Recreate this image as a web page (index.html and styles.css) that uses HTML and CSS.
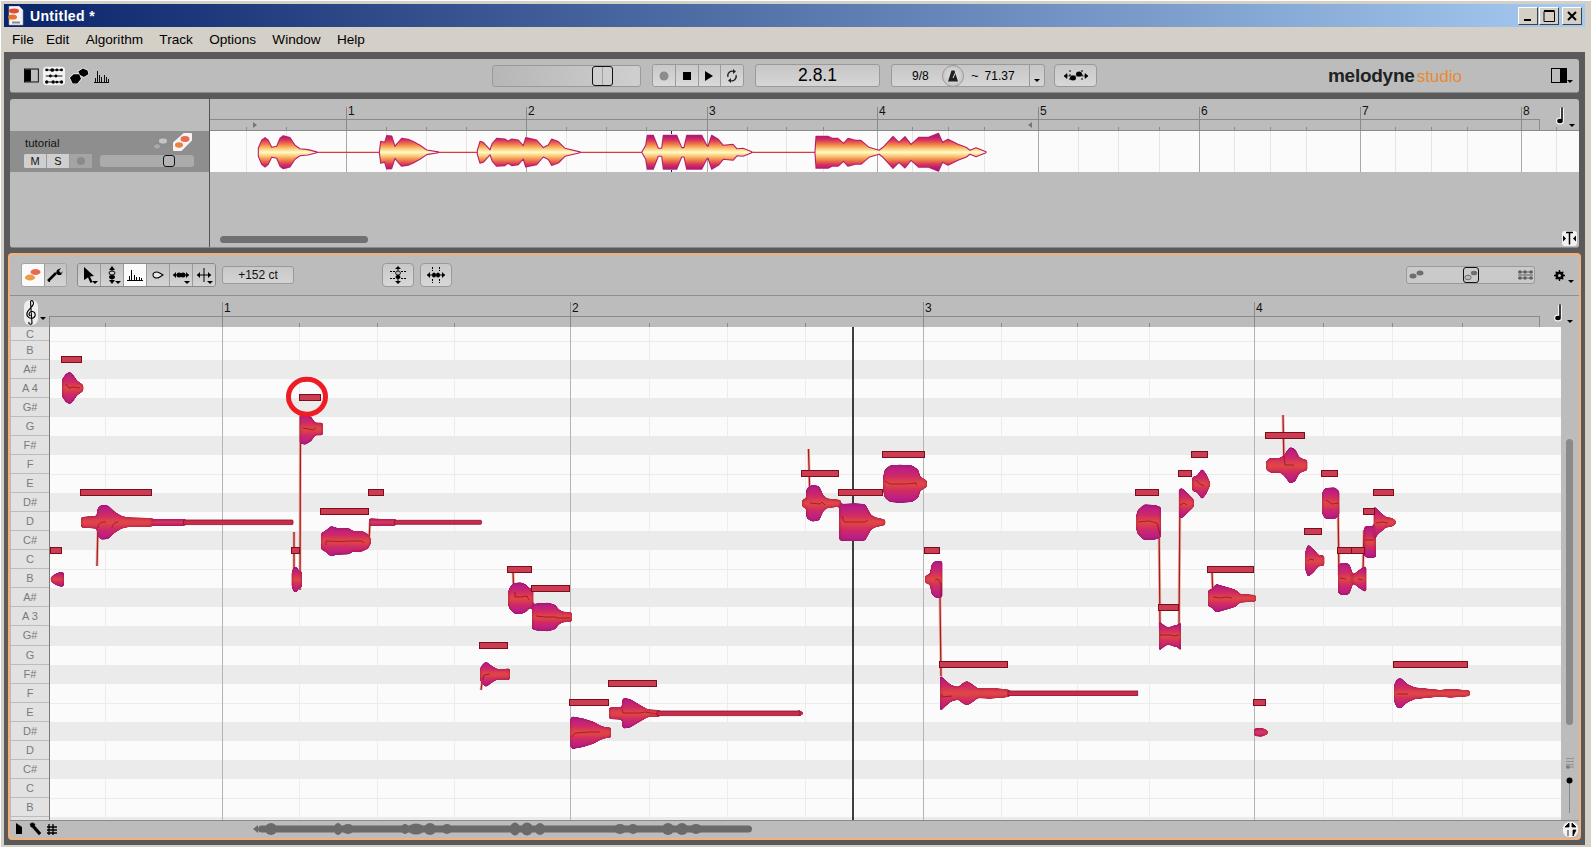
FILE: index.html
```html
<!DOCTYPE html>
<html lang="en">
<head>
<meta charset="utf-8">
<title>Untitled * - Melodyne studio</title>
<link rel="stylesheet" href="styles.css">
</head>
<body>
<svg class="defs" width="0" height="0">
  <defs>
    <linearGradient id="wave" gradientUnits="userSpaceOnUse" x1="0" y1="-16" x2="0" y2="16">
      <stop offset="0" stop-color="#b01a78"/><stop offset=".12" stop-color="#d8345a"/><stop offset=".26" stop-color="#f08248"/><stop offset=".38" stop-color="#fbc878"/><stop offset=".5" stop-color="#fffcc4"/><stop offset=".62" stop-color="#fbc878"/><stop offset=".74" stop-color="#f08248"/><stop offset=".88" stop-color="#d8345a"/><stop offset="1" stop-color="#b01a78"/>
    </linearGradient>
    <linearGradient id="blob" x1="0" y1="0" x2="0" y2="1">
      <stop offset="0" stop-color="#b01a92"/><stop offset=".3" stop-color="#d02a66"/><stop offset=".5" stop-color="#e24a40"/><stop offset=".7" stop-color="#d02a66"/><stop offset="1" stop-color="#b01a92"/>
    </linearGradient>
    <filter id="goo" x="-2%" y="-5%" width="104%" height="110%" color-interpolation-filters="sRGB">
      <feGaussianBlur stdDeviation=".9"/>
      <feComponentTransfer><feFuncA type="linear" slope="7" intercept="-2.6"/></feComponentTransfer>
    </filter>
    <filter id="goo-wave" x="-2%" y="-10%" width="104%" height="120%" color-interpolation-filters="sRGB">
      <feGaussianBlur stdDeviation=".55"/>
      <feComponentTransfer><feFuncA type="linear" slope="6" intercept="-2.2"/></feComponentTransfer>
    </filter>
    <filter id="soft" x="-2%" y="-40%" width="104%" height="180%"><feGaussianBlur stdDeviation=".6"/></filter>
    <filter id="edge" x="-2%" y="-10%" width="104%" height="120%"><feGaussianBlur stdDeviation=".35"/></filter>
  </defs>
</svg>
<div class="window">
  <header class="titlebar">
    <svg class="doc-icon" width="16" height="20" viewBox="0 0 16 20"><path d="M1 0H11L15 4V19H1Z" fill="#f4f4f4" stroke="#9a9a9a" stroke-width=".6"/><ellipse cx="6" cy="5" rx="5" ry="2.400" fill="#e04a38"/><ellipse cx="4.500" cy="11" rx="4.500" ry="2.600" fill="#e8702c"/><rect x="4" y="15.500" width="8" height="2" fill="#8a8a8a"/></svg>
    <span class="title-text">Untitled *</span>
    <div class="winbtns">
      <button class="winbtn"><svg width="14" height="14" viewBox="0 0 14 14"><rect x="3" y="10" width="7" height="2" fill="#000"/></svg></button>
      <button class="winbtn"><svg width="14" height="14" viewBox="0 0 14 14"><path d="M2 2.500H12.500V12.500H2Z M2 1.500H12.500" fill="none" stroke="#000"/></svg></button>
      <button class="winbtn winbtn-close"><svg width="14" height="14" viewBox="0 0 14 14"><path d="M3 3L11 11M11 3L3 11" stroke="#000" stroke-width="2"/></svg></button>
    </div>
  </header>
  <nav class="menubar">
    <span class="menu menu-first">File</span><span class="menu">Edit</span><span class="menu">Algorithm</span><span class="menu">Track</span><span class="menu">Options</span><span class="menu">Window</span><span class="menu">Help</span>
  </nav>
  <main class="workspace">
    <section class="panel topbar">
      <div class="view-icons">
        <svg width="16" height="15" viewBox="0 0 16 15"><rect x=".5" y=".5" width="15" height="14" fill="#bdbdbd" stroke="#000"/><rect x="1" y="1" width="6.500" height="13" fill="#000"/></svg>
        <svg class="halo-icon" width="24" height="20" viewBox="0 0 24 20"><rect x="0" y="0" width="24" height="20" rx="4" fill="#f3f3f3"/><path d="M3 3.500H21M3 10H21M3 16.500H21" stroke="#000"/><g fill="#000"><circle cx="4" cy="3.500" r="1.500"/><circle cx="10" cy="3.500" r="2"/><circle cx="15" cy="3.500" r="1.500"/><circle cx="20" cy="3.500" r="1.500"/><circle cx="8" cy="10" r="1.500"/><circle cx="14" cy="10" r="1.500"/><circle cx="4" cy="16.500" r="1.800"/><circle cx="11" cy="16.500" r="1.800"/><circle cx="15" cy="16.500" r="1.500"/><circle cx="20" cy="16.500" r="1.800"/></g></svg>
        <svg width="22" height="18" viewBox="0 0 22 18"><path d="M1 11 L5 7 L11 7 L13 12 L9 17 L4 17Z M10 4 L15 1 L20 3 L21 7 L16 10 L12 8Z" fill="#000" stroke="#f3f3f3" stroke-width="1.500" paint-order="stroke"/></svg>
        <svg width="18" height="14" viewBox="0 0 18 14"><path d="M1 13.500H17.500M2.500 13V9M4.500 13V2M7.500 13V6M9.500 13V8M12.500 13V6M14.500 13V8M16.500 13V10" stroke="#000" fill="none" shape-rendering="crispEdges"/></svg>
      </div>
      <div class="slider pos-slider"><span class="slider-handle handle-main"></span></div>
      <div class="btn-group transport">
        <span class="seg"><svg width="10" height="10" viewBox="0 0 10 10"><circle cx="5" cy="5" r="4.500" fill="#8c8c8c"/></svg></span>
        <span class="seg"><svg width="10" height="10" viewBox="0 0 10 10"><rect x="1" y="1" width="8" height="8" fill="#000"/></svg></span>
        <span class="seg"><svg width="10" height="12" viewBox="0 0 10 12"><path d="M1 1L9 6L1 11Z" fill="#000"/></svg></span>
        <span class="seg"><svg width="12" height="16" viewBox="0 0 12 16"><path d="M2 9A4.500 4.500 0 0 1 8 3.500M10 7A4.500 4.500 0 0 1 4 12.500" fill="none" stroke="#222" stroke-width="1.300"/><path d="M7 1L10 3.500L7 6ZM5 10L2 12.500L5 15Z" fill="#222"/></svg></span>
      </div>
      <div class="time-box">2.8.1</div>
      <div class="tempo-box">
        <span class="sig">9/8</span>
        <span class="metro"><svg width="12" height="12" viewBox="0 0 12 12"><path d="M4.500 0.500H7.500L11 11.500H1Z" fill="#222"/><path d="M6 8L9 1.500" stroke="#ddd"/></svg></span>
        <span class="tilde">~</span>
        <span class="bpm">71.37</span>
        <span class="tempo-drop"><i class="caret"></i></span>
      </div>
      <button class="tool-btn btn-zoom"><svg width="26" height="14" viewBox="0 0 26 14"><path d="M1 7H25M4 4.500L1 7L4 9.500ZM22 4.500L25 7L22 9.500Z" fill="#000" stroke="#000" stroke-width=".6"/><ellipse cx="10" cy="9" rx="3" ry="2.500"/><ellipse cx="16" cy="5" rx="3" ry="2.500"/><path d="M7 1V13M19 1V13" stroke="#000" stroke-dasharray="2 2"/></svg></button>
      <div class="logo"><span class="logo-main">melodyne</span><span class="logo-sub">studio</span></div>
      <div class="panel-right">
        <svg width="16" height="15" viewBox="0 0 16 15"><rect x=".5" y=".5" width="15" height="14" fill="#bdbdbd" stroke="#000"/><rect x="9" y="1" width="6.500" height="13" fill="#000"/></svg>
        <i class="caret caret-side"></i>
      </div>
    </section>

    <section class="panel trackpanel">
      <aside class="track-side">
        <div class="track-side-top"></div>
        <div class="track-row">
          <div class="track-row-top">
            <span class="track-name">tutorial</span>
            <svg class="track-mini" width="15" height="13" viewBox="0 0 15 13"><ellipse cx="10" cy="4" rx="4.500" ry="3" fill="#c4c4c4" stroke="#777" stroke-width=".5"/><ellipse cx="4" cy="9.500" rx="3.500" ry="2.800" fill="#a8a8a8" stroke="#777" stroke-width=".5"/></svg>
            <svg class="track-mini2" width="19" height="18" viewBox="0 0 19 18"><path d="M1 10L11 1H18V7L8 17H1Z" fill="#f4f4f4" stroke="#f4f4f4" stroke-linejoin="round" stroke-width="2"/><ellipse cx="12" cy="6" rx="4.500" ry="3" fill="#ea6a4e"/><ellipse cx="6" cy="12" rx="4" ry="2.800" fill="#e8843e"/></svg>
          </div>
          <div class="track-row-bottom">
            <div class="ms-group"><span class="ms">M</span><span class="ms">S</span><span class="ms"><i class="rec-dot"></i></span></div>
            <div class="slider vol-slider"><span class="slider-handle handle-vol"></span></div>
          </div>
        </div>
      </aside>
      <div class="track-main">
        <svg class="track-ruler" width="1369" height="32" viewBox="210 99 1369 32">
          <path class="rl" d="M210 119.500H1539.500V130M210 130.500H1579"/>
          <path class="rl" d="M346.500 107V130M526.500 107V130M707.500 107V130M877.500 107V130M1038.500 107V130M1199.500 107V130M1360.500 107V130M1521.500 107V130"/>
          <path class="rl" d="M246.500 127V130M286.500 127V130M386.500 127V130M426.500 127V130M466.500 127V130M566.500 127V130M606.500 127V130M646.500 127V130M747.500 127V130M786.500 127V130M823.500 127V130M912.500 127V130M948.500 127V130M984.500 127V130M1078.500 127V130M1118.500 127V130M1159.500 127V130M1234.500 127V130M1270.500 127V130M1306.500 127V130M1395.500 127V130M1431.500 127V130M1467.500 127V130M1556.500 127V130"/>
          <g class="ruler-num">
            <text x="348" y="115">1</text><text x="528" y="115">2</text><text x="709" y="115">3</text><text x="879" y="115">4</text><text x="1040" y="115">5</text><text x="1201" y="115">6</text><text x="1362" y="115">7</text><text x="1523" y="115">8</text>
          </g>
          <path d="M253 122L257 125L253 128Z M1032 122L1028 125L1032 128Z" fill="#777"/>
          <g transform="translate(1556,107)"><path d="M6 1V13" stroke="#f4f4f4" stroke-width="4"/><ellipse cx="4" cy="14" rx="4" ry="3.500" fill="#f4f4f4"/><path d="M6 0.500V13" stroke="#000" stroke-width="1.500"/><ellipse cx="4" cy="14" rx="2.800" ry="2.200" fill="#000"/></g>
          <path d="M1569 124H1575L1572 127Z" fill="#000"/>
        </svg>
        <svg class="lane" width="1369" height="41" viewBox="210 131 1369 41">
          <rect x="210" y="131" width="1369" height="41" fill="#fbfbfb"/>
          <path class="lane-minor" d="M246.500 131V172M286.500 131V172M386.500 131V172M426.500 131V172M466.500 131V172M566.500 131V172M606.500 131V172M646.500 131V172M747.500 131V172M786.500 131V172M823.500 131V172M912.500 131V172M948.500 131V172M984.500 131V172M1078.500 131V172M1118.500 131V172M1159.500 131V172M1234.500 131V172M1270.500 131V172M1306.500 131V172M1395.500 131V172M1431.500 131V172M1467.500 131V172M1556.500 131V172"/>
          <path class="lane-bar" d="M346.500 131V172M526.500 131V172M707.500 131V172M877.500 131V172M1038.500 131V172M1199.500 131V172M1360.500 131V172M1521.500 131V172"/>
          <path d="M258 152.300H986" stroke="#d63c3c" stroke-width="1.300"/>
          <path d="M671.500 131V134M671.500 170V172" stroke="#222"/>
          <g transform="translate(0,152.300)">
            <g fill="url(#wave)" filter="url(#goo-wave)">
              <g id="wave-shapes">
                <path d="M258.300 -4L261.700 -12L265 -14.700L268.300 -12L271.700 -5L276.700 -6L280 -14L283.300 -16.500L290 -14.700L295 -7L300 -3.500L308 -2.700L316.700 -.4L316.700 .4L308 2.700L300 3.500L295 7L290 14.700L283.300 16.500L280 14L276.700 6L271.700 5L268.300 12L265 14.700L261.700 12L258.300 4Z"/>
                <path d="M379.300 0L380.700 -11L384.700 -10L386.700 -16.700L391.700 -16.300L395 -6L397.300 -9L401.700 -14L408.300 -13L413.300 -10.700L420 -7L426.700 -2.300L438.300 -.4L438.300 .4L426.700 2.300L420 7L413.300 10.700L408.300 13L401.700 14L397.300 9L395 6L391.700 16.300L386.700 16.700L384.700 10L380.700 11Z"/>
                <path d="M477.300 -2L480 -11L483.300 -10L490 -2.500L492.300 -9L496.700 -14L505 -13.300L508 -11L511.700 -13.300L518.300 -12.300L523.300 -6.700L525.700 -14.700L536.700 -12.300L543.300 -4.700L548.300 -7.300L551.700 -13.300L558.300 -10.700L565 -4L580 -.4L580 .4L565 4L558.300 10.700L551.700 13.300L548.300 7.300L543.300 4.700L536.700 12.300L525.700 14.700L523.300 6.700L518.300 12.300L511.700 13.300L508 11L505 13.300L496.700 14L492.300 9L490 2.500L483.300 10L480 11L477.300 2Z"/>
                <path d="M641.700 0L645.700 -7L647.300 -17L653.300 -17L658.300 -4L661.700 -4L663.300 -17L676.700 -17L681.700 -4.700L684 -4.700L686.700 -17L701.700 -17L706.700 -7L708 -6L711.700 -17L718.300 -13L723.300 -7L733 -8L737 -3.500L743 -4L750.700 -1L752 0L750.700 1L743 4L737 3.500L733 8L723.300 7L718.300 13L711.700 17L708 6L706.700 7L701.700 17L686.700 17L684 4.700L681.700 4.700L676.700 17L663.300 17L661.700 4L658.300 4L653.300 17L647.300 17L645.700 7Z"/>
                <path d="M815 -1L816 -16L828 -16L832 -14L838 -14L843.600 -9L848 -14L855.500 -12L861 -12L869 -5L879 -2L883 -5L893 -16L899 -10L905 -15.700L911 -8L918.700 -15L928.600 -15L938.500 -19L942.500 -10L948 -13L958 -8L966 -5L970 -2L976 -4.500L986 -.5L986 .5L976 4.500L970 2L966 5L958 8L948 13L942.500 10L938.500 19L928.600 15L918.700 15L911 8L905 15.700L899 10L893 16L883 5L879 2L869 5L861 12L855.500 12L848 14L843.600 9L838 14L832 14L828 16L816 16L815 1Z"/>
              </g>
            </g>
            <use href="#wave-shapes" fill="none" stroke="#b81e6c" stroke-width="1.100" stroke-linejoin="round" filter="url(#edge)"/>
          </g>
        </svg>
        <div class="track-scroll"><span class="track-thumb"></span><svg class="split-icon" width="15" height="15" viewBox="0 0 15 15"><rect width="15" height="15" rx="3" fill="#f2f2f2"/><path d="M4 1.500H11M7.500 1.500V13.500" stroke="#000" stroke-width="1.500"/><path d="M1 4.500L4 7.500L1 10.500ZM14 4.500L11 7.500L14 10.500Z" fill="#000"/></svg></div>
      </div>
    </section>

    <section class="editor">
      <div class="ed-tools">
        <div class="btn-group btn-two">
          <span class="eseg eseg-on"><svg width="18" height="16" viewBox="0 0 18 16"><ellipse cx="11.500" cy="5" rx="5" ry="3" fill="#ea6a4e"/><ellipse cx="6" cy="10.500" rx="5" ry="3" fill="#ef9a44"/></svg></span>
          <span class="eseg"><svg width="18" height="16" viewBox="0 0 18 16"><path d="M2 14L10 6" stroke="#000" stroke-width="2.500"/><path d="M10 6L11 3L15 1L13 4L15 6L17 4L15 8L12 8Z" fill="#000"/><path d="M2 13L4 15" stroke="#000"/></svg></span>
        </div>
        <div class="btn-group btn-six">
          <span class="eseg"><svg width="14" height="18" viewBox="0 0 14 18"><path d="M2 1L12 10L8 10.500L10.500 16L8.500 17L6 11.500L2 14Z" fill="#000"/></svg><i class="caret caret-corner"></i></span>
          <span class="eseg"><svg width="12" height="18" viewBox="0 0 12 18"><path d="M6 0L9 4H3ZM6 18L3 14H9Z" fill="#000"/><path d="M6 3V15" stroke="#000"/><ellipse cx="6" cy="7" rx="3" ry="2" fill="#ccc" stroke="#000"/><ellipse cx="6" cy="11" rx="3" ry="2" fill="#000"/></svg><i class="caret caret-corner"></i></span>
          <span class="eseg eseg-on"><svg width="16" height="12" viewBox="0 0 16 12"><path d="M0 11.500H16M2.500 11V7M4.500 11V1M7.500 11V6M9.500 11V8M12.500 11V8M14.500 11V9" stroke="#000" fill="none"/></svg></span>
          <span class="eseg"><svg width="12" height="8" viewBox="0 0 12 8"><path d="M1 4C1 2 3 1 5 1C7 1 9 3 11 4C9 5 7 7 5 7C3 7 1 6 1 4Z" fill="#e8e8e8" stroke="#000" stroke-width="1.100"/></svg></span>
          <span class="eseg"><svg width="16" height="10" viewBox="0 0 16 10"><path d="M0 5H16" stroke="#000"/><path d="M0 5L3 2V8ZM16 5L13 2V8Z" fill="#000"/><ellipse cx="6" cy="5" rx="2.500" ry="2.500"/><ellipse cx="10" cy="5" rx="2.500" ry="2.500"/></svg><i class="caret caret-corner"></i></span>
          <span class="eseg"><svg width="14" height="16" viewBox="0 0 14 16"><path d="M0 8H14M7 1V15" stroke="#000"/><path d="M0 8L3 5V11ZM14 8L11 5V11Z" fill="#000"/></svg><i class="caret caret-corner"></i></span>
        </div>
        <div class="cents">+152 ct</div>
        <button class="tool-btn btn-a"><svg width="16" height="18" viewBox="0 0 16 18"><path d="M8 0L11 3H5ZM8 18L5 15H11Z" fill="#000"/><path d="M8 2V16" stroke="#000"/><ellipse cx="8" cy="7" rx="2.500" ry="2" fill="#bbb" stroke="#000" stroke-width=".8"/><ellipse cx="8" cy="11" rx="2.500" ry="2"/><path d="M0 5.500H5M11 5.500H16M0 12.500H5M11 12.500H16" stroke="#000" stroke-dasharray="2 1"/></svg></button>
        <button class="tool-btn btn-b"><svg width="18" height="16" viewBox="0 0 18 16"><path d="M0 8H18" stroke="#000"/><path d="M0 8L3 5V11ZM18 8L15 5V11Z" fill="#000"/><ellipse cx="7" cy="8" rx="2" ry="2.500"/><ellipse cx="11" cy="8" rx="2" ry="2.500"/><path d="M5.500 0V4M12.500 0V4M5.500 12V16M12.500 12V16" stroke="#000" stroke-dasharray="2 1"/></svg></button>
        <div class="slider view-slider">
          <svg class="vs-a" width="15" height="9" viewBox="0 0 15 9"><ellipse cx="4" cy="6" rx="3.500" ry="2.500" fill="#6e6e6e"/><ellipse cx="11" cy="3" rx="3.500" ry="2.500" fill="#6e6e6e"/></svg>
          <span class="slider-handle handle-view"><svg width="14" height="11" viewBox="0 0 14 11"><ellipse cx="4" cy="7.500" rx="3.200" ry="2.300" fill="#bbb" stroke="#6e6e6e"/><ellipse cx="10" cy="3" rx="3.200" ry="2.300" fill="#6e6e6e"/></svg></span>
          <svg class="vs-b" width="15" height="10" viewBox="0 0 15 10"><path d="M0 2H15M0 5H15M0 8H15" stroke="#5e5e5e"/><g fill="#5e5e5e"><circle cx="2" cy="2" r="1.700"/><circle cx="7" cy="2" r="1.700"/><circle cx="13" cy="2" r="1.700"/><circle cx="2" cy="8" r="1.700"/><circle cx="7" cy="8" r="1.700"/><circle cx="13" cy="8" r="1.700"/></g></svg>
        </div>
        <div class="gear-wrap">
          <svg width="11" height="11" viewBox="0 0 11 11"><circle cx="5.500" cy="5.500" r="3" fill="none" stroke="#000" stroke-width="2.200"/><path d="M5.500 0V11M0 5.500H11M1.700 1.700L9.300 9.300M9.300 1.700L1.700 9.300" stroke="#000" stroke-width="1.300"/><circle cx="5.500" cy="5.500" r="1.500" fill="#bdbdbd"/></svg>
          <i class="caret caret-gear"></i>
        </div>
      </div>

      <svg class="ed-ruler" width="1569" height="31" viewBox="10 296 1569 31">
        <path class="rl" d="M50 316.500H1539.500V327M49.500 316V327"/>
        <path class="rl" d="M222.500 302V327M570.500 302V327M923.500 302V327M1254.500 302V327"/>
        <path class="rl" d="M105.500 323V327M299.500 323V327M377.500 323V327M454.500 323V327M649.500 323V327M727.500 323V327M805.500 323V327M1001.500 323V327M1077.500 323V327M1149.500 323V327M1323.500 323V327M1392.500 323V327M1462.500 323V327"/>
        <g class="ruler-num">
          <text x="224" y="312">1</text><text x="572" y="312">2</text><text x="925" y="312">3</text><text x="1256" y="312">4</text>
        </g>
        <g transform="translate(24,300)">
          <rect x="0" y="0" width="14" height="25" rx="6" fill="#eeeeee"/>
          <path d="M8 23C8 25 4 24.500 5 22M8 23L6.500 2C6.500 0 9 0 9.500 3C10 6 4 9 3 13C2 17 6 19 9 18C12 17 12 12 8.500 11.500C5 11 4 15 6.500 16" fill="none" stroke="#000" stroke-width="1.100"/>
        </g>
        <path d="M40 317H46L43 320Z" fill="#000"/>
        <g transform="translate(1554,304)"><path d="M6 1V13" stroke="#f4f4f4" stroke-width="4"/><ellipse cx="4" cy="14" rx="4" ry="3.500" fill="#f4f4f4"/><path d="M6 0.500V13" stroke="#000" stroke-width="1.500"/><ellipse cx="4" cy="14" rx="2.800" ry="2.200" fill="#000"/></g>
        <path d="M1567 320H1573L1570 323Z" fill="#000"/>
      </svg>

      <div class="ed-grid">
        <div class="keys">
          <div class="key key-top">C</div>
          <div class="key">B</div><div class="key">A#</div><div class="key">A 4</div><div class="key">G#</div><div class="key">G</div><div class="key">F#</div><div class="key">F</div><div class="key">E</div><div class="key">D#</div><div class="key">D</div><div class="key">C#</div><div class="key">C</div>
          <div class="key">B</div><div class="key">A#</div><div class="key">A 3</div><div class="key">G#</div><div class="key">G</div><div class="key">F#</div><div class="key">F</div><div class="key">E</div><div class="key">D#</div><div class="key">D</div><div class="key">C#</div><div class="key">C</div>
          <div class="key">B</div><div class="key key-end"></div>
        </div>
        <div class="roll">
          <svg class="roll-lines" width="1511" height="493" viewBox="50 327 1511 493">
            <path class="minor" d="M105.500 327V820M299.500 327V820M377.500 327V820M454.500 327V820M649.500 327V820M727.500 327V820M805.500 327V820M1001.500 327V820M1077.500 327V820M1149.500 327V820M1323.500 327V820M1392.500 327V820M1462.500 327V820"/>
          </svg>
          <div class="rows">
            <div class="row row-top"></div>
            <div class="row sep"></div><div class="row blk"></div><div class="row"></div><div class="row blk"></div><div class="row"></div><div class="row blk"></div><div class="row"></div><div class="row sep"></div><div class="row blk"></div><div class="row"></div><div class="row blk"></div><div class="row"></div>
            <div class="row sep"></div><div class="row blk"></div><div class="row"></div><div class="row blk"></div><div class="row"></div><div class="row blk"></div><div class="row"></div><div class="row sep"></div><div class="row blk"></div><div class="row"></div><div class="row blk"></div><div class="row"></div>
            <div class="row sep"></div><div class="row blk row-end"></div>
          </div>
          <svg class="roll-notes" width="1511" height="493" viewBox="50 327 1511 493">
            <path class="bar" d="M222.500 327V820M570.500 327V820M923.500 327V820M1254.500 327V820"/>
            <path class="playhead" d="M853 327V820"/>

            <g class="pitch-halo">
              <path d="M97 566L98 522M294 532L294 585M300 590L300.500 415M369 541L370 522M481 690L483 675M808.500 449L810 503M940 597L941 676M513 570L514 598M1159 520L1160 628M1179 628L1180 490M1212 570L1213 598M1283 415L1284 465M1338 505L1339 575M1363 572L1364 530"/>
            </g>
            <g class="pitch-line">
              <path d="M97 566L98 522M294 532L294 585M300 590L300.500 415M369 541L370 522M481 690L483 675M808.500 449L810 503M940 597L941 676M513 572L514 598M1159 520L1160 628M1179 628L1180 490M1212 572L1213 598M1283 415L1284 465M1338 505L1339 575M1363 572L1364 530"/>
            </g>

            <g fill="url(#blob)" stroke="#8a1030" stroke-width=".6" stroke-linejoin="round" filter="url(#goo)">
              <path transform="translate(0,388)" d="M62.500 -9L66 -14L70 -16L73 -13L77 -7L80 -5L83 -3L83 3L80 5L77 7L73 13L70 16L66 14L62.500 9Z"/>
              <rect x="150" y="519.300" width="36" height="6" rx="1"/>
              <path transform="translate(0,522.300)" d="M81.300 -5L96.700 -6L98 -14L101 -17L108 -16.500L115 -10L121.700 -6L128 -4.500L152 -4L152 4L128 4.500L121.700 6L115 10L108 16.500L101 17L98 14L96.700 6L81.300 5Z"/>
              <path transform="translate(0,579.300)" d="M51 -2L55 -5L60 -7L63.500 -7L63.500 7L60 7L55 5L51 2Z"/>
              <path transform="translate(0,579.500)" d="M292 -7L294 -12.500L297 -12L299 -8L301.500 -8L301.500 8L299 8L297 12L294 12.500L292 7Z"/>
              <path transform="translate(0,429)" d="M300 -14L305 -15.500L311 -12L315 -6L322.700 -6L322.700 6L315 6L311 12L305 15.500L300 14Z"/>
              <path transform="translate(0,541.300)" d="M321.300 -8L325 -10L331 -15L337 -13L349 -12.700L353 -10L362 -10L368 -7L370.700 -2L370.700 2L368 7L362 10L353 10L349 12.700L337 13L331 15L325 10L321.300 8Z"/>
              <path transform="translate(0,522.300)" d="M369.300 -3.500L384.300 -3L396 -3L396 3L384.300 3L369.300 3.500Z"/>
              <path transform="translate(0,598.300)" d="M508.300 -6L510 -11L514 -15L521 -15.500L526 -13.500L529 -10L533 -9L533 9L529 10L526 13.500L521 15.500L514 15L510 11L508.300 6Z"/>
              <path transform="translate(0,617)" d="M532.300 -12L537 -13.300L548 -14L555 -12L559 -7L563 -5L571.700 -4.500L571.700 4.500L563 5L559 7L555 12L548 14L537 13.300L532.300 12Z"/>
              <path transform="translate(0,674.300)" d="M480.300 -6L483 -10L486 -12.500L492 -8L497 -5L504 -5L509.700 -5.500L509.700 5.500L504 5L497 5L492 8L486 12.500L483 10L480.300 6Z"/>
              <path transform="translate(0,732.700)" d="M570.300 -13L572 -16L583 -14L594 -10.500L600 -7L606 -5L610.700 -5L610.700 5L606 5L600 7L594 10.500L583 14L572 16L570.300 13Z"/>
              <path transform="translate(0,713.300)" d="M798 -3.500L804 0L798 3.500Z"/>
              <path transform="translate(0,713.300)" d="M609.300 -5.500L622 -6L623 -15L630 -14L640 -8L648 -3.500L660 -3L660 3L648 3.500L640 8L630 14L623 15L622 6L609.300 5.500Z"/>
              <path transform="translate(0,503.300)" d="M802.700 -4L806 -4L807 -15L812 -18L819 -17L823 -8L827 -4.500L840.700 -3L840.700 3L827 4.500L823 8L819 17L812 18L807 15L806 4L802.700 4Z"/>
              <path transform="translate(0,522.300)" d="M839.700 -18L855 -18.500L865 -18L871 -7L876 -4.500L885 -2.500L885 2.500L876 4.500L871 7L865 18L855 18.500L839.700 18Z"/>
              <path transform="translate(0,483.700)" d="M883.700 -8L885 -14L890 -18L900 -18.700L912 -18L918 -14L920 -7L926.700 -3L926.700 3L920 7L918 14L912 18L900 18.700L890 18L885 14L883.700 8Z"/>
              <path transform="translate(0,579.300)" d="M925.300 -3.500L930 -5L932 -15L935 -18L942 -18L942 18L935 18L932 15L930 5L925.300 3.500Z"/>
              <path transform="translate(0,693.300)" d="M940.300 -18L944 -14L951 -8L958 -6L963 -10L967 -12L972 -9L978 -4.500L990 -5L1004 -4L1010 -3L1010 3L1004 4L990 5L978 4.500L972 9L967 12L963 10L958 6L951 8L944 14L940.300 18Z"/>
              <path transform="translate(0,522.300)" d="M1136.300 -6L1138 -12L1144 -17.500L1155 -17L1160.700 -15L1160.700 15L1155 17L1144 17.500L1138 12L1136.300 6Z"/>
              <path transform="translate(0,636)" d="M1159.300 -15L1162 -12L1168 -8L1173 -10L1178 -11L1180.700 -14L1180.700 15L1178 11L1173 10L1168 8L1162 12L1159.300 15Z"/>
              <path transform="translate(0,503.300)" d="M1179.300 -14L1182 -15L1186 -11L1190 -7L1193.700 -3.500L1193.700 3.500L1190 7L1186 11L1182 15L1179.300 14Z"/>
              <path transform="translate(0,484)" d="M1192.700 -7L1197 -8L1202 -15L1206 -10L1210 -1L1210 1L1206 10L1202 15L1197 8L1192.700 7Z"/>
              <path transform="translate(0,598.300)" d="M1208.300 -8L1212 -9L1216 -14L1230 -10L1236 -8L1240 -4L1255.700 -3L1255.700 3L1240 4L1236 8L1230 10L1216 14L1212 9L1208.300 8Z"/>
              <path transform="translate(0,732.300)" d="M1254.300 -3.500L1262 -4L1267.700 -1.500L1267.700 1.500L1262 4L1254.300 3.500Z"/>
              <path transform="translate(0,465.300)" d="M1266.300 -4L1270 -7L1280 -7L1284 -10L1290 -18L1295 -16L1299 -8L1303 -6L1307 -5L1307 5L1303 6L1299 8L1295 16L1290 18L1284 10L1280 7L1270 7L1266.300 4Z"/>
              <path transform="translate(0,503.300)" d="M1322.300 -10L1325 -15L1335 -15.500L1339 -12L1339 12L1335 15.500L1325 15L1322.300 10Z"/>
              <path transform="translate(0,560.700)" d="M1305.300 -8L1308 -16L1313 -12L1319 -5L1324 -5L1324 5L1319 5L1313 12L1308 16L1305.300 8Z"/>
              <path transform="translate(0,579)" d="M1338.300 -14L1342 -16L1349 -15L1352.300 -6L1352.300 6L1349 15L1342 16L1338.300 14Z"/>
              <path transform="translate(0,579)" d="M1352 -3L1358 -8L1364 -12L1366 -12.500L1366 12.500L1364 12L1358 8L1352 3Z"/>
              <path transform="translate(0,541.700)" d="M1364.300 -14L1366 -15.500L1375.700 -15.500L1375.700 15.500L1366 15.500L1364.300 14Z"/>
              <path transform="translate(0,522.300)" d="M1374 -16L1380 -10L1386 -5L1392 -4L1395.700 -1.500L1395.700 1.500L1392 4L1386 5L1380 10L1374 16Z"/>
              <path transform="translate(0,693.300)" d="M1394.300 -8L1397 -14L1401 -15L1407 -9L1415 -5.500L1430 -4L1440 -3L1450 -4L1458 -3.500L1464 -3L1469.700 -2.500L1469.700 2.500L1464 3L1458 3.500L1450 4L1440 3L1430 4L1415 5.500L1407 9L1401 15L1397 14L1394.300 8Z"/>
            </g>

            <g class="tail">
              <rect x="183.500" y="520" width="109.500" height="4.600" rx="1"/>
              <rect x="394.500" y="520.300" width="87" height="4" rx="1"/>
              <rect x="657" y="711" width="143" height="4.600" rx="1"/>
              <rect x="1008" y="691" width="129.700" height="4.600"/>
            </g>

            <g class="trace">
              <path d="M98 528C98 522 102 522 106 522M112 528C112 524 116 522 118 522"/>
              <path d="M66 384L69 388L73 387L80 388"/>
              <path d="M303 428L309 429L313 430L316 428"/>
              <path d="M326 545L326 541L340 541.500L350 541L362 541L364 543"/>
              <path d="M515 592L515 597L522 597L527 596L529 600"/>
              <path d="M536 616L545 617L555 617L558 618L570 618"/>
              <path d="M483 680L484 675L490 674"/>
              <path d="M572 737L575 733L590 732L600 732"/>
              <path d="M622 709L623 713L640 713L645 712L657 714"/>
              <path d="M810 503L820 504L822 502L825 505"/>
              <path d="M842 516L844 522L865 522L868 520"/>
              <path d="M885 481L890 484L905 484L916 483L917 485"/>
              <path d="M935 580L938 579L941 584V596"/>
              <path d="M942 694V697L952 696"/>
              <path d="M1138 522L1149 521L1157 523L1160 535"/>
              <path d="M1160 635H1170L1175 636L1179 635"/>
              <path d="M1180 505L1184 503L1187 505"/>
              <path d="M1196 480L1200 484L1204 486"/>
              <path d="M1213 597L1220 598L1226 597L1232 598"/>
              <path d="M1284 456L1285 465L1294 465"/>
              <path d="M1326 500L1332 504L1339 503"/>
              <path d="M1308 561L1310 559L1314 560"/>
              <path d="M1340 578L1346 579M1358 579L1363 580"/>
              <path d="M1365 540H1374"/>
              <path d="M1376 523L1382 522L1388 523"/>
              <path d="M1397 694H1408"/>
            </g>

            <g class="note">
              <rect x="61.500" y="356.500" width="19.500" height="6"/>
              <rect x="299.500" y="394.500" width="21" height="6"/>
              <rect x="80.500" y="489.500" width="71" height="6"/>
              <rect x="50" y="547.500" width="11.500" height="6"/>
              <rect x="291.500" y="547.500" width="8" height="6"/>
              <rect x="320.500" y="508.500" width="48" height="6"/>
              <rect x="368.500" y="489.500" width="15" height="6"/>
              <rect x="507.500" y="566.500" width="24" height="6"/>
              <rect x="531.500" y="585.500" width="38" height="6"/>
              <rect x="479.500" y="642.500" width="28" height="6"/>
              <rect x="608.500" y="680.500" width="48" height="6"/>
              <rect x="569.500" y="699.500" width="39" height="6"/>
              <rect x="801.500" y="470.500" width="37" height="6"/>
              <rect x="838.500" y="489.500" width="44" height="6"/>
              <rect x="882.500" y="451.500" width="42" height="6"/>
              <rect x="924.500" y="547.500" width="15" height="6"/>
              <rect x="939.500" y="661.500" width="68" height="6"/>
              <rect x="1135.500" y="489.500" width="23" height="6"/>
              <rect x="1178.500" y="470.500" width="13" height="6"/>
              <rect x="1191.500" y="451.500" width="16" height="6"/>
              <rect x="1158.500" y="604.500" width="20" height="6"/>
              <rect x="1207.500" y="566.500" width="46" height="6"/>
              <rect x="1265.500" y="432.500" width="39" height="6"/>
              <rect x="1321.500" y="470.500" width="16" height="6"/>
              <rect x="1304.500" y="528.500" width="17" height="6"/>
              <rect x="1337.500" y="547.500" width="14" height="6"/>
              <rect x="1351.500" y="547.500" width="13" height="6"/>
              <rect x="1363.500" y="508.500" width="11" height="6"/>
              <rect x="1373.500" y="489.500" width="20" height="6"/>
              <rect x="1393.500" y="661.500" width="74" height="6"/>
              <rect x="1253.500" y="699.500" width="12" height="6"/>
            </g>
            <ellipse class="mark" cx="307" cy="396.700" rx="18.500" ry="17.500"/>
          </svg>
        </div>
        <svg class="ed-side" width="18" height="493" viewBox="1561 327 18 493">
          <rect x="1566" y="439" width="7" height="286" rx="3.500" fill="#8a8a8a"/>
          <g opacity=".45" stroke="#555" fill="none"><path d="M1566 759C1568 757 1571 760 1574 758M1566 762C1568 760 1571 763 1574 761M1566 765C1568 763 1571 766 1574 764"/><path d="M1566 767H1574"/></g>
          <circle cx="1568" cy="767" r="2" fill="#666" opacity=".6"/>
          <path d="M1569.500 782V813" stroke="#888"/>
          <circle cx="1569.500" cy="780.500" r="3" fill="#000"/>
        </svg>
      </div>

      <div class="ed-status">
        <svg class="status-svg" width="1569" height="18" viewBox="10 820 1569 18">
          <path d="M16 823L22 827V834H16Z" fill="#000"/>
          <path d="M31 826L33 824L41 833L39 835Z M30 824C32 822 35 823 35 825L33 827L31 827Z" fill="#000" stroke="#000" stroke-width=".5"/>
          <path d="M49 824V835M53 824V835M47 827H57M47 830H57M47 833H57" stroke="#000" stroke-width="1.300"/>
          <g fill="#6a6a6a" filter="url(#soft)">
            <rect x="258" y="825.500" width="494" height="7" rx="3.500"/>
            <path d="M253 829L258 825V833Z"/>
            <ellipse cx="271" cy="829" rx="6" ry="6"/><ellipse cx="338" cy="829" rx="4" ry="6"/><ellipse cx="348" cy="829" rx="6" ry="5"/>
            <ellipse cx="405" cy="829" rx="4" ry="5"/><ellipse cx="416" cy="829" rx="8" ry="5.500"/><ellipse cx="430" cy="829" rx="6" ry="6"/><ellipse cx="447" cy="829" rx="5" ry="5"/>
            <ellipse cx="515" cy="829" rx="5" ry="6.500"/><ellipse cx="527" cy="829" rx="6" ry="6.500"/><ellipse cx="540" cy="829" rx="5" ry="6"/>
            <ellipse cx="620" cy="829" rx="6" ry="5"/><ellipse cx="633" cy="829" rx="5" ry="5"/><ellipse cx="668" cy="829" rx="6" ry="6"/><ellipse cx="682" cy="829" rx="6" ry="6"/><ellipse cx="696" cy="829" rx="6" ry="5"/>
          </g>
          <g transform="translate(1563,822)"><rect width="15" height="15" rx="6" fill="#f2f2f2"/><path d="M2 5L6 1V5ZM13 5L9 1V5ZM5 8V14M10 14V8H13Z" fill="#000" stroke="#000" stroke-width=".8"/></g>
        </svg>
      </div>
    </section>
  </main>
</div>
</body>
</html>
```

FILE: styles.css
```css
* { box-sizing: border-box; }
html, body { margin: 0; padding: 0; }
body {
  width: 1591px;
  height: 847px;
  overflow: hidden;
  background: #d4d0c8;
  font-family: "Liberation Sans", Arial, sans-serif;
}
svg { display: block; }
.defs { position: absolute; }

.window {
  width: 1591px;
  height: 847px;
  padding: 3px 6px 2px 3px;
  display: flex;
  flex-direction: column;
  border-top: 1px solid #fff;
  border-left: 1px solid #fff;
  background: #d4d0c8;
}

.titlebar {
  height: 23px;
  flex: none;
  display: flex;
  align-items: center;
  padding: 0 3px 0 4px;
  background: linear-gradient(90deg, #0a246a 0%, #a6caf0 100%);
}
.title-text { margin-left: 6px; color: #fff; font-weight: bold; font-size: 14px; letter-spacing: .35px; }
.winbtns { margin-left: auto; display: flex; align-items: center; }
.winbtn {
  width: 20px;
  height: 18px;
  margin-left: 1px;
  padding: 1px 0 0 2px;
  background: #d4d0c8;
  border: 1px solid;
  border-color: #fff #404040 #404040 #fff;
}
.winbtn-close { margin-left: 3px; }

.menubar {
  height: 25px;
  flex: none;
  display: flex;
  align-items: center;
  font-size: 13.600px;
  color: #000;
  padding-left: 8px;
}
.menu { margin-right: 16.300px; }
.menu-first { margin-right: 12px; }

.workspace {
  flex: 1;
  background: #5a5a5a;
  padding: 7px 6px 5px;
  display: flex;
  flex-direction: column;
  min-height: 0;
}

.panel { background: #bcbcbc; border-radius: 3px; flex: none; }

.topbar {
  height: 34px;
  display: flex;
  align-items: center;
  padding: 0 11px 0 14px;
  border-bottom: 1px solid #8a8a8a;
}
.view-icons { width: 86px; display: flex; align-items: center; gap: 4px; }
.slider {
  position: relative;
  background: linear-gradient(90deg, #b6b6b6, #cfcfcf);
  border: 1px solid #9a9a9a;
  border-radius: 3px;
}
.slider-handle {
  position: absolute;
  background: #cfcfcf;
  border: 1px solid #111;
  border-radius: 3px;
}
.pos-slider { width: 149px; height: 22px; margin-left: 382px; }
.handle-main { left: 99px; top: 0; width: 21px; height: 20px; background: linear-gradient(90deg, #cfcfcf 48%, #a0a0a0 48%, #a0a0a0 52%, #cfcfcf 52%); }

.btn-group { display: flex; border: 1px solid #9a9a9a; border-radius: 3px; overflow: hidden; }
.transport { margin-left: 11px; width: 92px; height: 23px; }
.seg {
  flex: 1;
  display: flex;
  align-items: center;
  justify-content: center;
  background: linear-gradient(#c8c8c8, #dadada);
  border-left: 1px solid #9a9a9a;
}
.seg:first-child { border-left: 0; }

.time-box {
  margin-left: 11px;
  width: 125px;
  height: 23px;
  display: flex;
  align-items: center;
  justify-content: center;
  font-size: 17.500px;
  color: #000;
  background: linear-gradient(#c6c6c6, #d6d6d6);
  border: 1px solid #9a9a9a;
  border-radius: 3px;
}
.tempo-box {
  margin-left: 11px;
  width: 154px;
  height: 23px;
  display: flex;
  align-items: center;
  font-size: 12px;
  color: #000;
  background: linear-gradient(#c6c6c6, #d6d6d6);
  border: 1px solid #9a9a9a;
  border-radius: 3px;
}
.sig { margin-left: 20px; width: 30px; }
.metro {
  width: 22px;
  height: 22px;
  display: flex;
  align-items: center;
  justify-content: center;
  border-radius: 50%;
  background: radial-gradient(#e4e4e4, #bcbcbc);
  border: 1px solid #9a9a9a;
}
.tilde { margin-left: 7px; font-size: 13px; }
.bpm { margin-left: 6px; }
.tempo-drop {
  margin-left: auto;
  width: 15px;
  height: 100%;
  display: flex;
  align-items: flex-end;
  justify-content: center;
  padding-bottom: 4px;
  border-left: 1px solid #9a9a9a;
}
.caret {
  display: block;
  width: 0;
  height: 0;
  border-left: 3px solid transparent;
  border-right: 3px solid transparent;
  border-top: 3px solid #000;
}
.tool-btn {
  height: 24px;
  padding: 0;
  display: flex;
  align-items: center;
  justify-content: center;
  background: linear-gradient(#c8c8c8, #d8d8d8);
  border: 1px solid #9a9a9a;
  border-radius: 4px;
}
.btn-zoom { width: 43px; height: 23px; margin-left: 9px; }
.logo { margin-left: auto; display: flex; align-items: baseline; margin-right: 89px; }
.logo-main { font-size: 19px; font-weight: bold; letter-spacing: -.25px; color: #222; }
.logo-sub { font-size: 17px; color: #e88a32; margin-left: 2px; }
.panel-right { position: relative; width: 16px; margin-right: 1px; }
.caret-side { position: absolute; right: -6px; bottom: 0; }

.trackpanel {
  height: 149px;
  margin-top: 6px;
  display: flex;
  border-bottom: 1px solid #8a8a8a;
}
.track-side {
  width: 200px;
  flex: none;
  border-right: 1px solid #555;
}
.track-side-top { height: 32px; }
.track-row { height: 41px; background: #8e8e8e; padding: 0 0 0 14px; }
.track-row-top { height: 23px; display: flex; align-items: center; position: relative; }
.track-name { font-size: 11.500px; color: #111; width: 36px; margin-left: 1px; }
.track-mini { margin-left: 92px; margin-top: 2px; }
.track-mini2 { margin-left: 5px; margin-top: -2px; }
.track-row-bottom { display: flex; align-items: center; }
.ms-group { display: flex; width: 68px; height: 14px; background: #c8c8c8; border-radius: 2px; overflow: hidden; }
.ms {
  flex: 1;
  display: flex;
  align-items: center;
  justify-content: center;
  font-size: 11px;
  color: #111;
  background: #cfcfcf;
  border-left: 1px solid #9a9a9a;
}
.ms:first-child { border-left: 0; }
.ms:last-child { background: #a4a4a4; }
.rec-dot { width: 8px; height: 8px; border-radius: 50%; background: #8a8a8a; }
.vol-slider { width: 94px; height: 12px; margin-left: 8px; background: #ababab; border: 0; }
.handle-vol { left: 63px; top: 0; width: 12px; height: 12px; background: #b4b4b4; }

.track-main { flex: 1; display: flex; flex-direction: column; min-width: 0; }
.track-ruler { flex: none; }
.lane { flex: none; }
.track-scroll { flex: 1; position: relative; }
.track-thumb {
  position: absolute;
  left: 10px;
  bottom: 4px;
  width: 148px;
  height: 7px;
  background: #707070;
  border-radius: 4px;
}
.split-icon { position: absolute; right: 2px; bottom: 1px; }

.rl { stroke: #8a8a8a; fill: none; shape-rendering: crispEdges; }
.ruler-num text { font-family: "Liberation Sans", Arial, sans-serif; font-size: 12px; fill: #111; }
.lane-minor { stroke: #e6e6e6; shape-rendering: crispEdges; }
.lane-bar { stroke: #a8a8a8; shape-rendering: crispEdges; }

.editor {
  flex: none;
  height: 587px;
  margin: 5px -2px 0;
  border: 2px solid #f4b078;
  border-radius: 4px;
  background: #bcbcbc;
  display: flex;
  flex-direction: column;
  overflow: hidden;
}
.ed-tools {
  height: 41px;
  flex: none;
  display: flex;
  align-items: center;
  padding-left: 11px;
  border-bottom: 1px solid #8f8f8f;
}
.btn-two { width: 46px; height: 24px; border-color: #a4a4a4; }
.btn-six { width: 139px; height: 24px; margin-left: 10px; border-color: #8a8a8a; }
.eseg {
  position: relative;
  flex: 1;
  display: flex;
  align-items: center;
  justify-content: center;
  background: linear-gradient(#c2c2c2, #d4d4d4);
  border-left: 1px solid #9a9a9a;
}
.eseg:first-child { border-left: 0; }
.eseg-on { background: #fafafa; }
.caret-corner { position: absolute; right: 2px; bottom: 2px; }
.cents {
  width: 72px;
  height: 18px;
  margin-left: 6px;
  display: flex;
  align-items: center;
  justify-content: center;
  font-size: 12px;
  color: #111;
  background: linear-gradient(#c8c8c8, #d4d4d4);
  border: 1px solid #9a9a9a;
  border-radius: 3px;
}
.btn-a { width: 32px; margin-left: 88px; }
.btn-b { width: 32px; margin-left: 6px; }
.view-slider {
  width: 129px;
  height: 18px;
  margin-left: auto;
  background: #cacaca;
}
.vs-a { position: absolute; left: 2px; top: 3px; }
.vs-b { position: absolute; right: 1px; top: 3px; }
.handle-view {
  left: 56px;
  top: 0;
  width: 16px;
  height: 16px;
  display: flex;
  align-items: center;
  justify-content: center;
  background: #cacaca;
}
.gear-wrap {
  position: relative;
  width: 11px;
  margin-left: 19px;
  margin-right: 14px;
}
.caret-gear { position: absolute; right: -9px; bottom: -2px; }

.ed-ruler { flex: none; }
.ed-grid { height: 493px; flex: none; display: flex; }
.keys {
  width: 39px;
  margin-left: 1px;
  border-right: 1px solid #7a7a7a;
  display: flex;
  flex-direction: column;
  flex: none;
}
.key {
  height: 19.040px;
  flex: none;
  background: #e2e2e2;
  border-bottom: 1px solid #bcbcbc;
  font-size: 11px;
  color: #7a7a7a;
  display: flex;
  align-items: center;
  justify-content: center;
}
.key-top { height: 14px; align-items: flex-end; }
.key-end { height: 3px; border-bottom: 0; }

.roll {
  position: relative;
  width: 1511px;
  flex: none;
  background: #fbfbfb;
  overflow: hidden;
}
.roll-lines, .roll-notes { position: absolute; left: 0; top: 0; }
.rows { position: relative; display: flex; flex-direction: column; height: 100%; }
.row { height: 19.040px; flex: none; }
.row-top { height: 14px; }
.row-end { height: 3px; }
.blk { background: #ebebeb; }
.sep { border-top: 1px solid #ececec; }
.minor { stroke: #ececec; shape-rendering: crispEdges; }
.bar { stroke: #b4b4b4; shape-rendering: crispEdges; }
.playhead { stroke: #000; stroke-width: 1.500; }
.pitch-halo { stroke: #e8a090; stroke-width: 3; opacity: .7; fill: none; }
.pitch-line { stroke: #a81c1c; stroke-width: 1.300; fill: none; }
.tail rect { fill: #c92c4a; stroke: #8a1030; stroke-width: .8; }
.trace { stroke: #8a1018; stroke-width: .7; fill: none; }
.note rect { fill: #cb3d52; stroke: #7e0c1c; stroke-width: 1; shape-rendering: crispEdges; }
.mark { fill: none; stroke: #ee1c25; stroke-width: 5; }

.ed-side { flex: none; }
.ed-status { height: 18px; flex: none; border-top: 1px solid #8a8a8a; }
.status-svg { margin-top: -1px; }
```
